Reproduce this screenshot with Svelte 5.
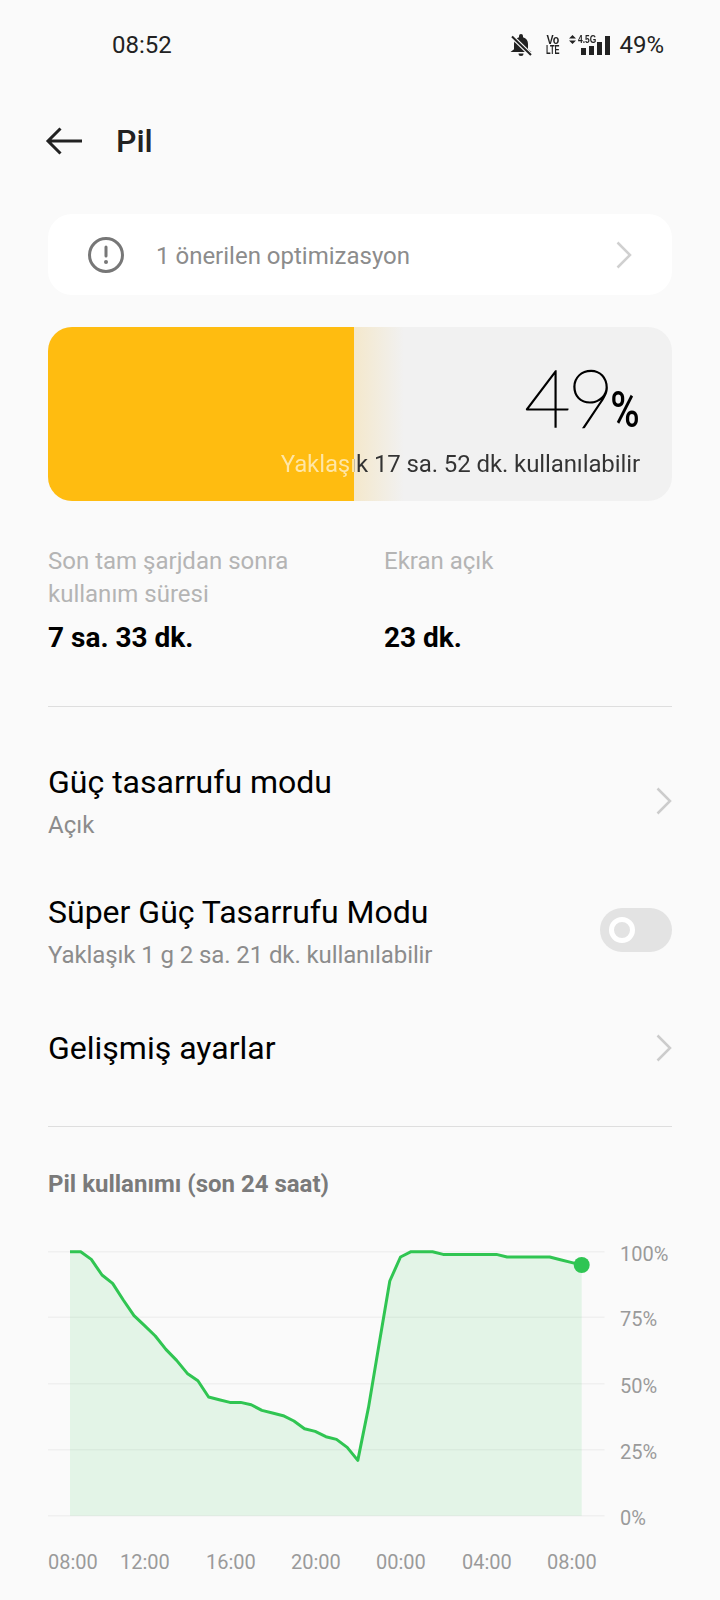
<script>
  const raw = [65,65,88,135,160,210,257,287,318,358,391,430,452,501,509,517,517,524,541,549,557,573,596,604,620,628,652,691,532,340,153,81,65,65,65,73,73,73,73,73,73,81,81,81,81,81,89,97,105];
  const x0 = 70, step = (581.7 - 70) / (raw.length - 1);
  const pts = raw.map((z, i) => [+(x0 + i * step).toFixed(1), +((z - 65) / 3 + 21.7).toFixed(1)]);
  const line = pts.map((p) => p.join(',')).join(' ');
  const area = `${line} 581.7,285.7 70,285.7`;
  const last = pts[pts.length - 1];
  const grid = [
    { y: 21.7, l: '100%' },
    { y: 87.3, l: '75%' },
    { y: 153.7, l: '50%' },
    { y: 219.7, l: '25%' },
    { y: 285.7, l: '0%' }
  ];
  const xs = [
    { x: 48, l: '08:00' },
    { x: 120, l: '12:00' },
    { x: 206, l: '16:00' },
    { x: 291, l: '20:00' },
    { x: 376, l: '00:00' },
    { x: 462, l: '04:00' },
    { x: 547, l: '08:00' }
  ];
</script>

<div class="page">
  <div class="status">
    <span class="clock">08:52</span>
    <div class="sys">
      <svg class="bell" width="24" height="24" viewBox="0 0 24 24">
        <path d="M12 1a2 2 0 0 1 2 2v1.200a7 7 0 0 1 5 6.800v5.300l3.500 2.700H1.500L5 16.300v-5.300a7 7 0 0 1 5-6.800V3a2 2 0 0 1 2-2zM9.500 20.500h5a2.500 2.500 0 0 1-5 0z" fill="#222"/>
        <path d="M2 2.500 22 22" stroke="#fafafa" stroke-width="4.500"/>
        <path d="M3 3.500 22 22" stroke="#222" stroke-width="2"/>
      </svg>
      <span class="volte"><b class="vo">Vo</b><b class="lte">LTE</b></span>
      <div class="net">
        <svg class="arrows" width="7" height="9" viewBox="0 0 7 9"><path d="M3.500 0 7 3.600H0zM0 5.400h7L3.500 9z" fill="#222"/></svg>
        <span class="g">4.5G</span>
        <div class="bars"><i class="b1"></i><i class="b2"></i><i class="b3"></i><i class="b4"></i></div>
      </div>
      <span class="batt">49%</span>
    </div>
  </div>

  <div class="head">
    <svg width="38" height="30" viewBox="0 0 38 30"><path d="M37 15H3M15.500 2.500 3 15 15.500 27.500" fill="none" stroke="#222" stroke-width="3"/></svg>
    <h1>Pil</h1>
  </div>

  <div class="opt">
    <svg width="38" height="38" viewBox="0 0 38 38">
      <circle cx="19" cy="19" r="16.500" fill="none" stroke="#777" stroke-width="3"/>
      <rect x="17.500" y="9.500" width="3" height="12" rx="1.500" fill="#777"/>
      <circle cx="19" cy="26" r="2" fill="#777"/>
    </svg>
    <span class="optText">1 önerilen optimizasyon</span>
    <svg width="16" height="28" viewBox="0 0 16 28"><path d="M1.500 1.500 14 14 1.500 26.500" fill="none" stroke="#d0d0d0" stroke-width="2.500"/></svg>
  </div>

  <div class="battery">
    <div class="fill"></div>
    <div class="fade"></div>
    <div class="battInfo">
      <div class="pct">49<span>%</span></div>
      <div class="remain">Yaklaşık 17 sa. 52 dk. kullanılabilir</div>
    </div>
  </div>

  <div class="stats">
    <div class="stat s1">
      <div class="lab">Son tam şarjdan sonra<br />kullanım süresi</div>
      <div class="val">7 sa. 33 dk.</div>
    </div>
    <div class="stat">
      <div class="lab">Ekran açık<br />&nbsp;</div>
      <div class="val">23 dk.</div>
    </div>
  </div>

  <div class="rule r1"></div>

  <div class="row rowA">
    <div>
      <div class="rt">Güç tasarrufu modu</div>
      <div class="rs">Açık</div>
    </div>
    <svg width="16" height="28" viewBox="0 0 16 28"><path d="M1.500 1.500 14 14 1.500 26.500" fill="none" stroke="#ccc" stroke-width="2.500"/></svg>
  </div>
  <div class="row rowB">
    <div>
      <div class="rt">Süper Güç Tasarrufu Modu</div>
      <div class="rs tight">Yaklaşık 1 g 2 sa. 21 dk. kullanılabilir</div>
    </div>
    <div class="toggle"><div class="knob"></div></div>
  </div>
  <div class="row rowC">
    <div class="rt">Gelişmiş ayarlar</div>
    <svg width="16" height="28" viewBox="0 0 16 28"><path d="M1.500 1.500 14 14 1.500 26.500" fill="none" stroke="#ccc" stroke-width="2.500"/></svg>
  </div>

  <div class="rule r2"></div>

  <div class="chartHead">Pil kullanımı (son 24 saat)</div>

  <svg class="chart" width="720" height="350" viewBox="0 0 720 350">
    {#each grid as g}
      <line x1="48" x2="604.500" y1={g.y} y2={g.y} stroke="#f0f0f0" stroke-width="1.500"/>
      <text x="620" y={g.y + 9} class="tick">{g.l}</text>
    {/each}
    <polygon points={area} fill="#2dc653" fill-opacity="0.11"/>
    <polyline points={line} fill="none" stroke="#30c552" stroke-width="3" stroke-linejoin="round"/>
    <circle cx={last[0]} cy={last[1]} r="8" fill="#2fc553"/>
    {#each xs as t}
      <text x={t.x} y="339" class="tick">{t.l}</text>
    {/each}
  </svg>
</div>

<style>
  :global(body) { margin: 0; background: #fafafa; }
  .page {
    width: 720px;
    height: 1600px;
    overflow: hidden;
    background: #fafafa;
    font-family: Roboto, "Liberation Sans", sans-serif;
    color: #000;
  }
  .status {
    height: 90px;
    display: flex;
    align-items: center;
    justify-content: space-between;
    padding: 0 56px 0 112px;
    box-sizing: border-box;
  }
  .clock { font-size: 24px; color: #222; }
  .sys { display: flex; align-items: center; color: #222; }
  .bell { margin-right: 12px; }
  .volte { display: flex; flex-direction: column; width: 14px; height: 20px; font-size: 13px; line-height: 10px; align-items: center; margin-right: 10px; font-family: "Liberation Sans", sans-serif; white-space: nowrap; }
  .vo { transform: scaleX(0.82); }
  .lte { transform: scaleX(0.58); }
  .net { width: 41px; height: 20px; margin-right: 9px; position: relative; }
  .arrows { position: absolute; left: 0; top: 0; }
  .g { position: absolute; left: 9px; top: -2px; font-size: 10.500px; line-height: 12px; font-weight: 700; font-family: "Liberation Sans", sans-serif; transform: scaleX(0.8); transform-origin: left center; white-space: nowrap; }
  .bars { position: absolute; inset: 0; display: flex; gap: 3px; align-items: flex-end; justify-content: flex-end; }
  .bars i { width: 5px; background: #222; display: block; }
  .b1 { height: 7px; }
  .b2 { height: 9px; }
  .b3 { height: 13px; }
  .b4 { height: 19px; }
  .batt { font-size: 24px; }

  .head { height: 62px; margin-top: 20px; display: flex; align-items: center; padding-left: 45px; }
  h1 { margin: 0 0 0 33px; font-size: 32px; font-weight: 500; color: #222; }

  .opt {
    margin: 42px 48px 0;
    height: 81px;
    background: #fff;
    border-radius: 24px;
    display: flex;
    align-items: center;
    padding: 0 40px 0 39px;
  }
  .optText { margin-left: 31px; padding-top: 3px; font-size: 24px; color: #8c8c8c; flex: 1; }

  .battery {
    margin: 32px 48px 0;
    height: 174px;
    border-radius: 24px;
    background: #f1f1f1;
    overflow: hidden;
    display: flex;
    justify-content: flex-end;
    position: relative;
  }
  .fill { position: absolute; left: 0; top: 0; bottom: 0; width: 306px; background: #ffbc10; }
  .fade { position: absolute; left: 306px; top: 0; bottom: 0; width: 50px; background: linear-gradient(90deg, #f4e8cc, #f1f1f1); }
  .battInfo { position: relative; display: flex; flex-direction: column; align-items: flex-end; padding-right: 32px; }
  .pct { font-family: Lato, sans-serif; font-weight: 100; font-size: 80px; line-height: 84px; margin-top: 27px; letter-spacing: -3px; -webkit-text-stroke: 1.300px #000; }
  .pct span { display: inline-block; font-family: Roboto, sans-serif; font-size: 50px; line-height: 46px; font-weight: 500; letter-spacing: 0; -webkit-text-stroke: 0; margin-left: -8px; transform: scaleX(0.8); transform-origin: right bottom; }
  .remain {
    font-size: 24px;
    line-height: 30px;
    margin-top: 11px;
    white-space: nowrap;
    letter-spacing: -0.1px;
    background: linear-gradient(90deg, #ffe6a6 73px, #333 73px);
    -webkit-background-clip: text;
    background-clip: text;
    color: transparent;
  }

  .stats { display: flex; margin: 44px 48px 0; }
  .s1 { width: 336px; }
  .lab { font-size: 24px; line-height: 33px; color: #b4b4b4; }
  .val { font-size: 28px; font-weight: 700; line-height: 36px; margin-top: 9px; }

  .rule { height: 1px; margin: 0 48px; background: #dedede; }
  .r1 { margin-top: 50px; }
  .r2 { margin-top: 35px; }

  .row { margin: 0 48px; display: flex; align-items: center; justify-content: space-between; }
  .rowA { margin-top: 51px; height: 86px; }
  .rowB { margin-top: 44px; height: 86px; }
  .rowC { margin-top: 31px; height: 86px; }
  .rt { font-size: 32px; line-height: 44px; }
  .rs { font-size: 24px; line-height: 34px; margin-top: 4px; color: #8c8c8c; }
  .tight { letter-spacing: -0.1px; }
  .toggle { width: 72px; height: 44px; border-radius: 22px; margin-bottom: 2px; background: #e3e3e3; display: flex; align-items: center; padding-left: 9px; box-sizing: border-box; }
  .knob { width: 16px; height: 16px; border-radius: 50%; border: 5px solid #fff; }

  .chartHead { margin: 42px 48px 0; font-size: 24px; font-weight: 700; line-height: 30px; color: #7a7a7a; }
  .chart { display: block; margin-top: 31px; }
  .tick { font-size: 20px; fill: #9a9a9a; font-family: Roboto, sans-serif; }
</style>
